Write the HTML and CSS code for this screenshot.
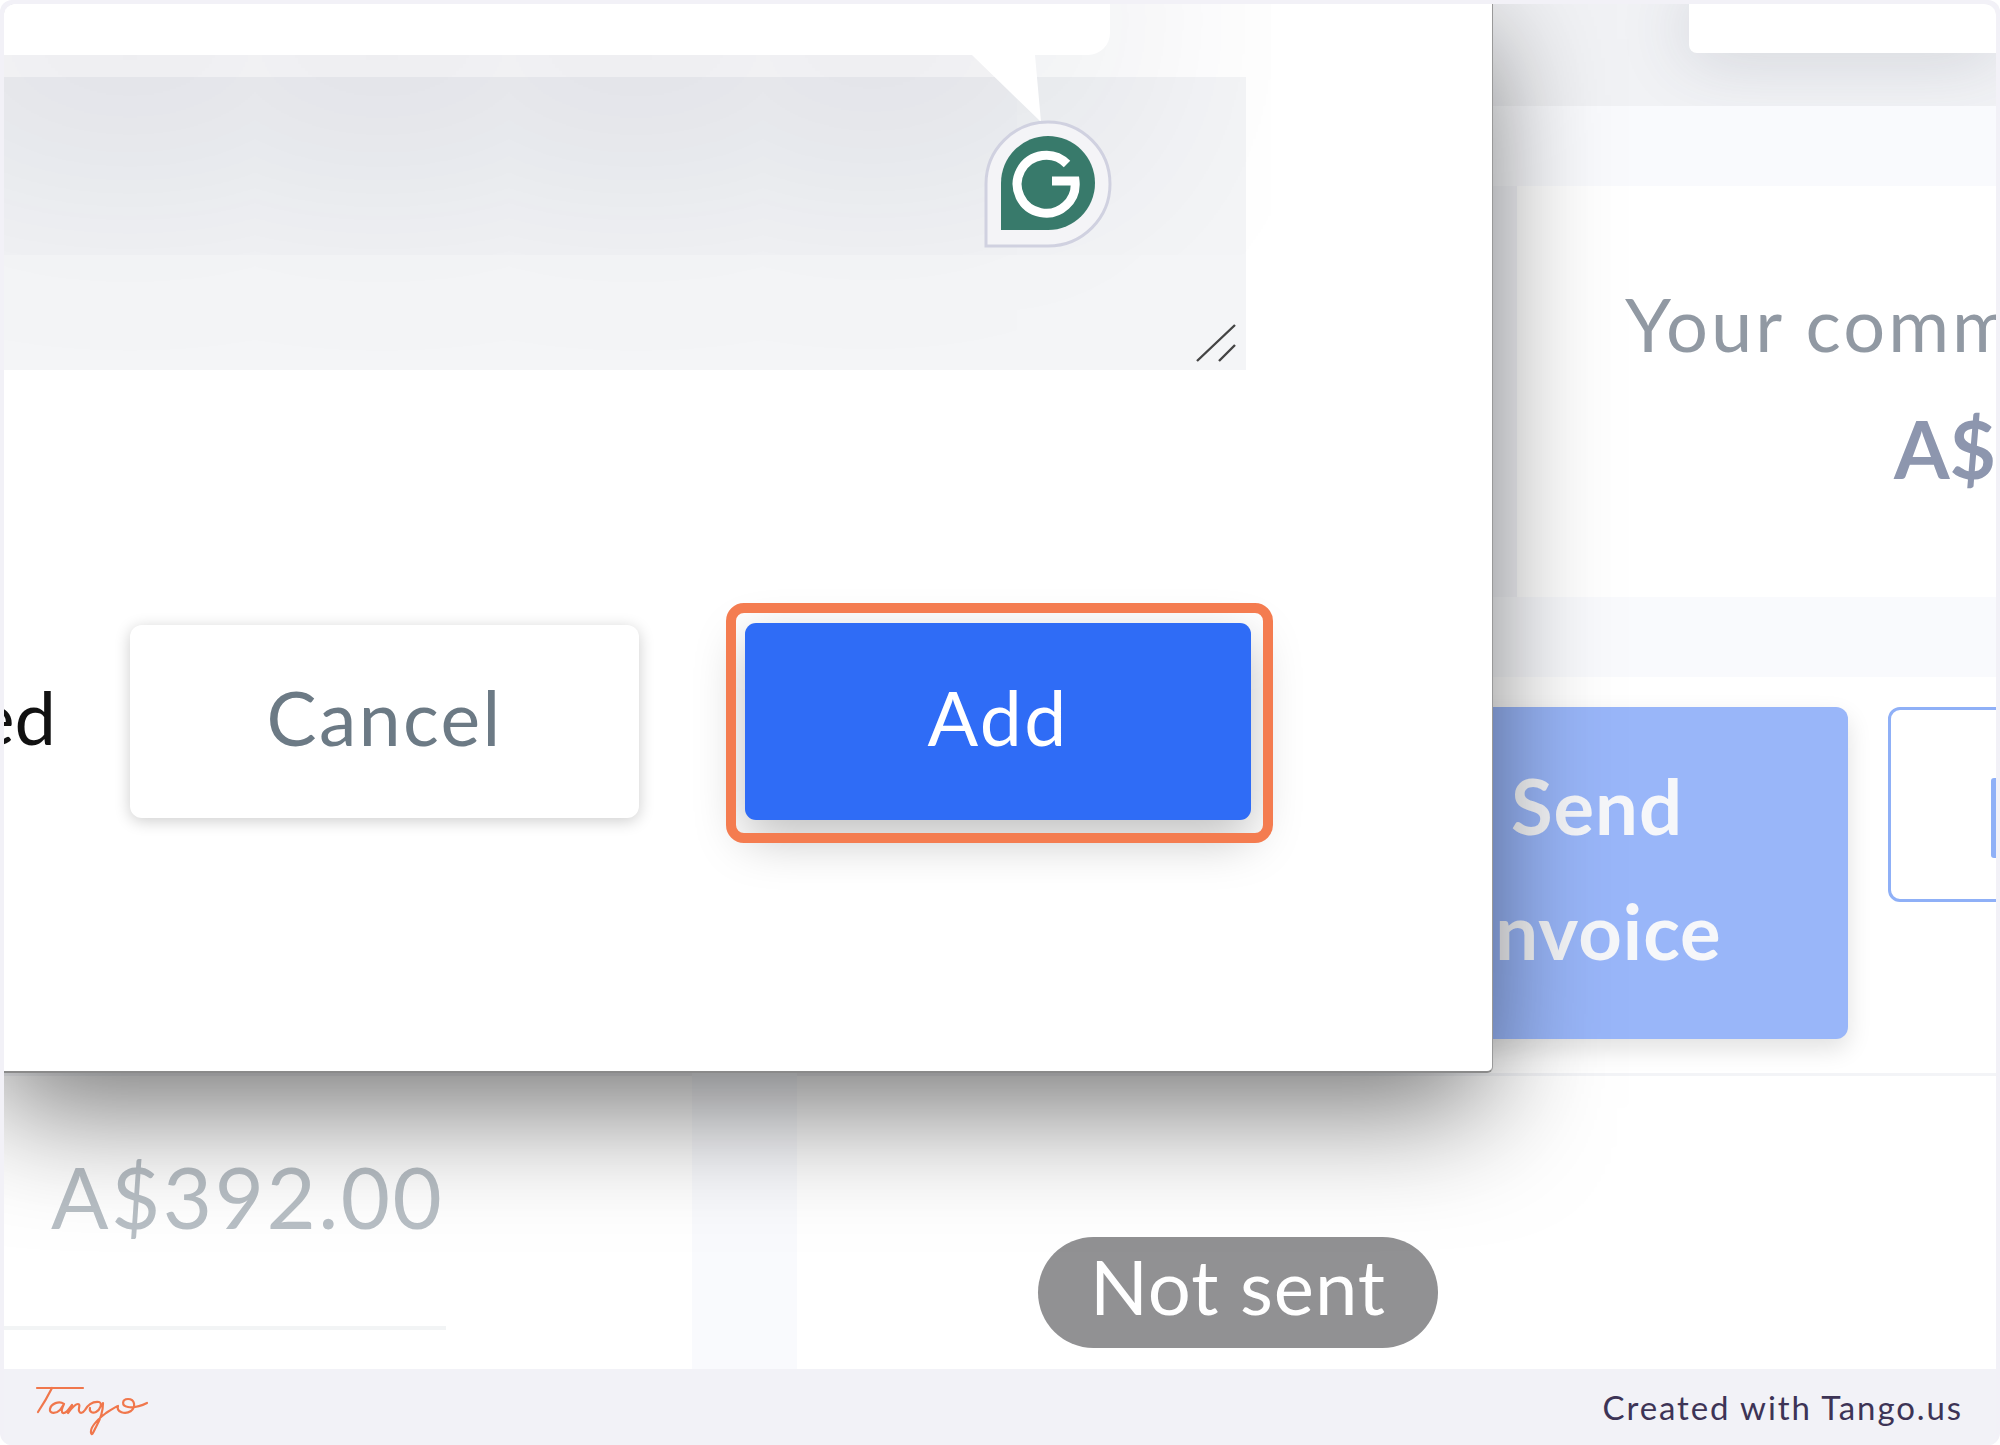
FILE: index.html
```html
<!DOCTYPE html>
<html lang="en">
<head>
<meta charset="utf-8">
<title>Add comment</title>
<link rel="stylesheet" href="styles.css">
</head>
<body>
<div class="frame">
  <div class="viewport">
    <div class="strip"><div class="tab"></div></div>
    <div class="band"></div>
    <div class="summary">
      <div class="card">
        <div class="card-label">Your commission</div>
        <div class="card-value">A$392.00</div>
      </div>
    </div>
    <div class="band"></div>
    <div class="actions">
      <button class="send">Send<br>Invoice</button>
      <button class="outline"><span class="outline-mark"></span></button>
    </div>
    <div class="lower">
      <div class="amount-cell"><div class="amount">A$392.00</div></div>
      <div class="lower-band"></div>
      <div class="status-cell"><span class="pill">Not sent</span></div>
    </div>

    <div class="dialog">
      <div class="popup"></div>
      <div class="textarea">
        <svg class="grammarly" viewBox="0 0 128 128" width="128" height="128" aria-hidden="true">
          <path d="M2 126V64A62 62 0 1 1 64 126Z" fill="#f4f4f7" stroke="#d0d1e0" stroke-width="3"/>
          <path d="M17 110V63A47 47 0 1 1 64 110Z" fill="#387a6b"/>
          <path d="M83 44A29 29 0 1 0 91 61H68" fill="none" stroke="#fff" stroke-width="9"/>
        </svg>
        <svg class="resizer" viewBox="0 0 40 38" width="40" height="38" aria-hidden="true">
          <path d="M39 1 1 37M39 21 23 37" fill="none" stroke="#444" stroke-width="2.4"/>
        </svg>
      </div>
      <div class="dialog-footer">
        <span class="required">Required</span>
        <button class="cancel">Cancel</button>
        <button class="add">Add</button>
      </div>
    </div>
  </div>
  <footer class="footer">
    <svg class="logo" viewBox="32 22 120 58" width="120" height="58" role="img" aria-label="Tango logo">
      <path d="M37 28H83M52 28C47 38 42 46 38 52M64 44C59 40 51 44 50 49C49 54 56 54 60 50L64 44C62 48 61 52 63 53C66 54 69 49 72 45C71 48 69 51 68 53C71 49 75 44 78 44C81 44 78 49 79 51C80 54 83 53 85 50C87 46 92 41 99 42C103 43 100 50 96 52C92 54 89 51 90 48M103 43C103 52 100 60 96 67C93 73 92 76 91 73C90 68 97 60 106 53C111 50 115 47 118 46C116 52 125 55 131 51C136 47 135 39 128 39C122 39 121 46 128 47C134 48 141 46 147 43" fill="none" stroke="#f0774c" stroke-width="2.2" stroke-linecap="round" stroke-linejoin="round"/>
    </svg>
    <span class="credit">Created with Tango.us</span>
  </footer>
</div>
</body>
</html>
```
FILE: styles.css
```css
* { box-sizing: border-box; }
html, body { margin: 0; padding: 0; background: #fff; }
body { font-family: "Lato", "Noto Sans", sans-serif; }
button { font: inherit; border: 0; padding: 0; }

.frame {
  width: 2000px;
  height: 1445px;
  padding: 4px 4px 0;
  display: flex;
  flex-direction: column;
  background: #f2f1f7;
  border-radius: 12px;
  overflow: hidden;
}
.viewport {
  position: relative;
  height: 1365px;
  flex: none;
  overflow: hidden;
  background: #fff;
  border-radius: 12px 12px 0 0;
}

.strip {
  height: 102px;
  display: flex;
  justify-content: flex-end;
  overflow: hidden;
  background: #f1f2f5;
}
.tab {
  width: 307px;
  height: 49px;
  background: #fff;
  border-radius: 0 0 0 8px;
  box-shadow: 0 0 70px rgba(60, 70, 90, .22);
}
.band { height: 80px; background: #f9fafd; }
.summary {
  height: 411px;
  display: flex;
  justify-content: flex-end;
  background: #f9fafd;
}
.card {
  width: 479px;
  padding-top: 88px;
  background: #fff;
  white-space: nowrap;
  box-shadow: -25px 0 0 #f4f5f9;
}
.card-label { padding-left: 108px; overflow: hidden; font-size: 74px; line-height: 100px; letter-spacing: 3px; color: #9199a3; }
.card-value { padding-left: 377px; overflow: hidden; margin-top: 24px; font-size: 80px; line-height: 100px; font-weight: 700; color: #8d96ae; }

.actions {
  height: 396px;
  padding: 30px 0 0 1342px;
  display: flex;
  align-items: flex-start;
  gap: 40px;
  overflow: hidden;
  background: #fff;
}
.send {
  flex: none;
  width: 502px;
  height: 332px;
  padding-bottom: 10px;
  font-size: 76px;
  line-height: 125px;
  font-weight: 700;
  letter-spacing: 1px;
  color: #f6f7fa;
  background: #99b6f9;
  border-radius: 12px;
  box-shadow: 0 10px 24px rgba(0, 0, 0, .12);
}
.outline {
  flex: none;
  width: 400px;
  height: 195px;
  padding: 26px 0 0 100px;
  display: block;
  background: #fff;
  border: 3px solid #8fb0f7;
  border-radius: 12px;
}
.outline-mark { display: block; width: 5px; height: 80px; background: #8fb0f7; border-radius: 3px 0 0 3px; }

.lower {
  height: 296px;
  display: grid;
  grid-template-columns: 688px 105px 1fr;
  border-top: 3px solid #f3f4f7;
}
.amount-cell { padding-left: 47px; }
.amount {
  width: 442px;
  height: 254px;
  padding-top: 65px;
  margin-left: -47px;
  padding-left: 47px;
  font-size: 85px;
  line-height: 110px;
  letter-spacing: 2.5px;
  color: #b8bfc5;
  border-bottom: 4px solid #f2f4f5;
}
.lower-band { background: #f9fafd; margin-top: -3px; }
.status-cell { padding: 161px 0 0 241px; }
.pill {
  display: inline-flex;
  align-items: center;
  justify-content: center;
  width: 400px;
  height: 111px;
  padding-bottom: 15px;
  border-radius: 56px;
  font-size: 76px;
  letter-spacing: 1px;
  color: #fff;
  background: #919193;
}

.dialog {
  position: absolute;
  left: 0;
  top: 0;
  width: 1489px;
  height: 1069px;
  overflow: hidden;
  background: #fff;
  border-right: 1px solid #999;
  border-bottom: 2px solid #8a8a8a;
  border-radius: 0 0 6px 0;
  box-shadow: -8px 35px 120px rgba(0, 0, 0, .55);
}
.popup {
  position: absolute;
  left: -300px;
  top: -400px;
  z-index: 2;
  width: 1406px;
  height: 451px;
  background: #fff;
  border-radius: 0 0 22px 0;
  box-shadow: 0 110px 280px rgba(20, 30, 60, .11);
}
.popup::after {
  content: "";
  position: absolute;
  left: 1268px;
  top: 100%;
  width: 70px;
  height: 68px;
  background: #fff;
  clip-path: polygon(0 0, 63px 0, 69px 67px);
}
.textarea {
  position: relative;
  width: 1242px;
  height: 293px;
  margin-top: 73px;
  background: #f4f5f7;
}
.grammarly { position: absolute; left: 980px; top: 43px; z-index: 3; }
.resizer { position: absolute; left: 1192px; top: 247px; z-index: 3; }
.dialog-footer {
  height: 197px;
  margin-top: 253px;
  padding-right: 241px;
  display: flex;
  justify-content: flex-end;
  align-items: center;
}
.required { flex: none; margin-right: 74px; margin-bottom: 10px; font-size: 74px; color: #111; }
.cancel {
  flex: none;
  width: 509px;
  height: 193px;
  margin-right: 106px;
  padding-bottom: 10px;
  font-size: 75px;
  letter-spacing: 2.4px;
  color: #6c7a85;
  background: #fff;
  border-radius: 12px;
  box-shadow: 0 3px 16px rgba(0, 0, 0, .2);
}
.add {
  position: relative;
  flex: none;
  width: 506px;
  height: 197px;
  padding-bottom: 10px;
  font-size: 75px;
  letter-spacing: 2.4px;
  color: #fff;
  background: #2f6cf6;
  border-radius: 11px;
  box-shadow: 0 18px 50px rgba(0, 0, 0, .25);
}
.add::after {
  content: "";
  position: absolute;
  left: -19px;
  right: -22px;
  top: -20px;
  bottom: -23px;
  border: 10px solid #f47c50;
  border-radius: 18px;
}

.footer {
  height: 76px;
  flex: none;
  padding: 0 33px 0 28px;
  display: flex;
  align-items: center;
  justify-content: space-between;
  background: #f2f2f7;
}
.logo { align-self: flex-start; margin-top: 13px; }
.credit { font-size: 33px; letter-spacing: 1.9px; color: #3d3456; white-space: nowrap; }
```
